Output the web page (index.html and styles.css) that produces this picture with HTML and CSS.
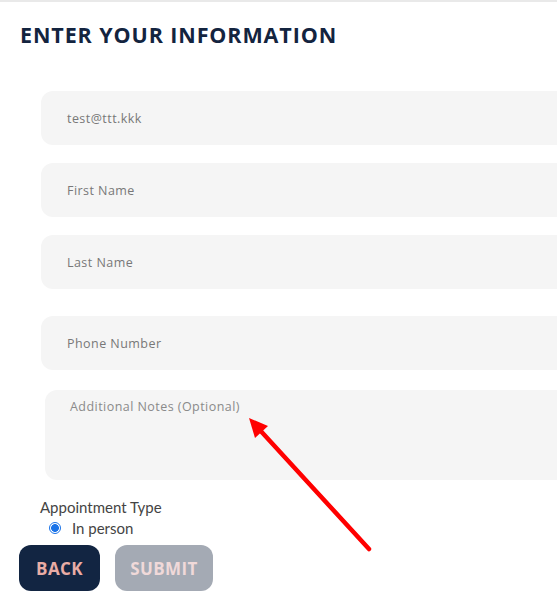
FILE: index.html
```html
<!DOCTYPE html>
<html>
<head>
<meta charset="utf-8">
<link rel="stylesheet" href="styles.css">
</head>
<body>
<div class="page">
  <h1 class="title">ENTER YOUR INFORMATION</h1>
  <div class="fields">
    <div class="field">test@ttt.kkk</div>
    <div class="field">First Name</div>
    <div class="field">Last Name</div>
    <div class="field field-phone">Phone Number</div>
    <div class="field notes">Additional Notes (Optional)</div>
  </div>
  <div class="appt">
    <div class="appt-label">Appointment Type</div>
    <label class="radio-row"><span class="radio"></span>In person</label>
  </div>
  <div class="buttons">
    <button class="btn back">BACK</button>
    <button class="btn submit">SUBMIT</button>
  </div>
</div>
<svg class="arrow" width="557" height="611" viewBox="0 0 557 611">
  <line x1="369" y1="549" x2="258" y2="428" stroke="#ff0000" stroke-width="4.5" stroke-linecap="round"/>
  <polygon points="249,418 255,438 268,426" fill="#ff0000"/>
</svg>
</body>
</html>
```
FILE: styles.css
```css
html, body {
  margin: 0;
  padding: 0;
  background: #fff;
  overflow: hidden;
}
body {
  width: 557px;
  height: 611px;
  position: relative;
  font-family: "Open Sans", "Noto Sans", sans-serif;
}
.page {
  border-top: 2px solid #e9e9e9;
  height: 609px;
  box-sizing: border-box;
}
.title {
  margin: 0;
  padding: 20px 0 0 20px;
  font-size: 21.5px;
  font-weight: 700;
  color: #13243f;
  letter-spacing: 0.9px;
  line-height: 26px;
}
.fields {
  margin-top: 43px;
  display: flex;
  flex-direction: column;
  gap: 18px;
}
.field {
  margin-left: 41px;
  height: 54px;
  box-sizing: border-box;
  background: #f5f5f5;
  border-radius: 12px 0 0 12px;
  padding-left: 26px;
  display: flex;
  align-items: center;
  font-size: 12.5px;
  letter-spacing: 0.45px;
  color: #787878;
}
.field-phone {
  margin-top: 9px;
}
.notes {
  margin-top: 2px;
  margin-left: 45px;
  height: 90px;
  align-items: flex-start;
  padding-left: 25px;
  padding-top: 8px;
  color: #8a8a8a;
}
.appt {
  margin-top: 17px;
  padding-left: 40px;
  font-family: "Lato", "Open Sans", sans-serif;
  color: #444;
  font-size: 15px;
}
.appt-label {
  line-height: 20px;
}
.radio-row {
  display: flex;
  align-items: center;
  gap: 11px;
  margin-left: 9px;
  line-height: 20px;
  margin-top: 1px;
}
.radio {
  width: 12px;
  height: 12px;
  box-sizing: border-box;
  border-radius: 50%;
  border: 1px solid #1a73e8;
  background: radial-gradient(circle, #1a73e8 0 3.6px, #fff 4.2px);
}
.buttons {
  margin-top: 7px;
  padding-left: 19px;
  display: flex;
  gap: 15px;
}
.btn {
  height: 46px;
  border: none;
  border-radius: 12px;
  font-family: "Open Sans", sans-serif;
  font-weight: 700;
  font-size: 17px;
  letter-spacing: 0.4px;
  padding: 0;
}
.back {
  width: 81px;
  background: #122542;
  color: #e9aca5;
}
.submit {
  width: 98px;
  background: #a4aab4;
  color: #f0d9d9;
}
.arrow {
  position: absolute;
  left: 0;
  top: 0;
  pointer-events: none;
}
```
